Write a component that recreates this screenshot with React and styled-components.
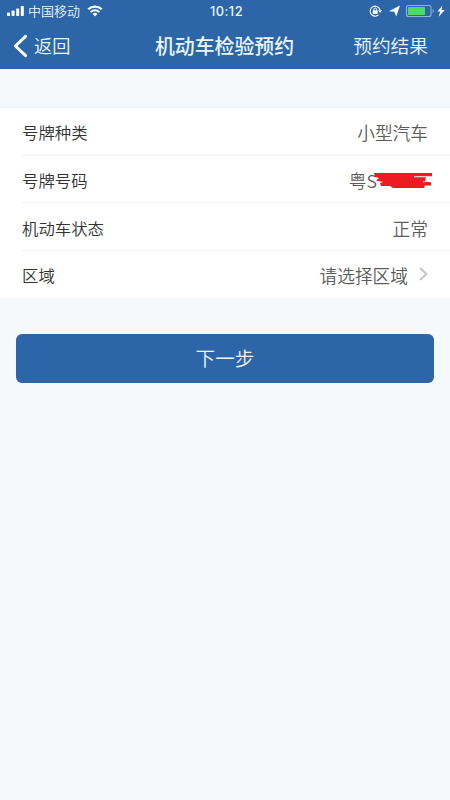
import React from "react";
import styled, { createGlobalStyle } from "styled-components";

const GlobalStyle = createGlobalStyle`
  body {
    margin: 0;
    background: #f5f9fb;
    font-family: "Noto Sans CJK SC", sans-serif;
    font-weight: 350;
  }
`;

const Page = styled.div`
  min-height: 800px;
  width: 450px;
  background: #f5f9fb;
`;

const Header = styled.header`
  height: 69px;
  box-sizing: border-box;
  border-bottom: 1px solid #2560a4;
  background: #2c66a8;
  color: #ebf5fd;
`;

const StatusBar = styled.div`
  display: grid;
  grid-template-columns: 1fr auto 1fr;
  align-items: center;
  height: 23px;
  padding: 0 4px 0 7px;
`;

const StatusGroup = styled.div`
  display: flex;
  align-items: center;
  justify-content: ${props => (props.$end ? "flex-end" : "flex-start")};
`;

const Carrier = styled.span`
  margin: -1px 7px 0 4px;
  font-size: 13px;
  line-height: 22px;
`;

const Clock = styled.span`
  font-family: Inter, sans-serif;
  font-size: 12.8px;
  font-weight: 500;
  letter-spacing: 0.5px;
`;

const NavBar = styled.div`
  display: grid;
  grid-template-columns: 1fr auto 1fr;
  align-items: center;
  height: 46px;
  padding: 0 22px 0 13px;
`;

const BackLink = styled.a`
  display: flex;
  align-items: center;
  gap: 6px;
  font-size: 18.2px;
  line-height: 44px;
`;

const BackText = styled.span`
  padding-bottom: 2px;
`;

const Title = styled.h1`
  margin: 0 0 0 8px;
  font-size: 19.9px;
  font-weight: 500;
  line-height: 46px;
`;

const ResultLink = styled.a`
  justify-self: end;
  padding-bottom: 2px;
  font-size: 18.7px;
  line-height: 44px;
`;

const Form = styled.div`
  margin-top: 38px;
  padding-left: 22px;
  border-top: 1px solid #f0f2f3;
  background: #fff;
`;

const Row = styled.div`
  display: flex;
  align-items: center;
  justify-content: space-between;
  height: ${props => (props.$last ? "47px" : "47.7px")};
  box-sizing: border-box;
  padding: 2px 22px 0 0;
  border-bottom: 1px solid ${props => (props.$last ? "#fff" : "#f3f3f3")};
`;

const Label = styled.span`
  font-size: 16.4px;
  color: #333;
`;

const Value = styled.span`
  display: flex;
  align-items: center;
  font-size: 17.7px;
  color: #5c5c5c;
`;

const Plate = styled(Value)`
  margin-right: -4px;
`;

const NextButton = styled.button`
  display: block;
  width: 418px;
  height: 49px;
  margin: 36px 16px 0;
  padding: 0 0 2px;
  border: 0;
  border-radius: 6px;
  background: #2c66a8;
  color: #ebf5fd;
  font-family: inherit;
  font-size: 19.6px;
  font-weight: inherit;
`;

const Signal = () => (
  <svg width="17" height="11" viewBox="0 0 17 11" fill="#fff">
    <rect x="0" y="6.5" width="3" height="3.5" rx="0.7" />
    <rect x="4.6" y="4.5" width="3" height="5.5" rx="0.7" />
    <rect x="9.2" y="2.5" width="3" height="7.5" rx="0.7" />
    <rect x="13.8" y="0" width="3" height="10" rx="0.7" />
  </svg>
);

const WifiSvg = styled.svg`
  margin-top: -2px;
`;

const Wifi = () => (
  <WifiSvg width="16" height="12" viewBox="0 0 16 12" fill="none" stroke="#fff">
    <path d="M1.2 4.3a9.8 9.8 0 0 1 13.6 0" strokeWidth="2.2" />
    <path d="M3.7 7.1a6.2 6.2 0 0 1 8.6 0" strokeWidth="2" />
    <path d="M5.7 8.9a3.4 3.4 0 0 1 4.6 0L8 11.4z" fill="#fff" stroke="none" />
  </WifiSvg>
);

const StatusSvg = styled.svg`
  margin-top: -2px;
`;

const StatusIcons = () => (
  <StatusSvg width="77" height="14" viewBox="0 0 77 14" fill="none">
    {/* rotation lock */}
    <path
      d="M9.5 10.9A5 5 0 1 1 11 6"
      stroke="#fff"
      strokeWidth="1.1"
    />
    <path d="M9 6.2h4l-2 2.7z" fill="#fff" />
    <rect x="3.8" y="6.3" width="4.8" height="3.7" rx="0.4" fill="#fff" />
    <path d="M4.8 6.5V5.4a1.4 1.4 0 0 1 2.8 0v1.1" stroke="#fff" />
    {/* location */}
    <path d="M31 1.5L27.2 12.4l-1.8-4.6-5.6-.6z" fill="#fff" />
    {/* battery */}
    <rect
      x="37.5"
      y="1.5"
      width="24.5"
      height="11"
      rx="2"
      stroke="#92b5d1"
      strokeWidth="1.1"
    />
    <rect x="39" y="3" width="17" height="8" rx="0.7" fill="#4cda64" />
    <path d="M63.7 5v4q1.2-.7 1.2-2t-1.2-2z" fill="#92b5d1" />
    <path d="M73.3 1.5l-4.8 6h2.7l-1.5 5.3 6-6.8h-3.2z" fill="#fff" />
  </StatusSvg>
);

const BackIcon = () => (
  <svg width="15" height="24" viewBox="0 0 15 24" fill="none">
    <path
      d="M12.6 2.3L2.4 12l10.2 9.7"
      stroke="#fff"
      strokeWidth="3"
      strokeLinecap="round"
      strokeLinejoin="round"
    />
  </svg>
);

const ArrowSvg = styled.svg`
  margin: -3px 0 0 11px;
`;

const Arrow = () => (
  <ArrowSvg width="9" height="14" viewBox="0 0 9 14" fill="none">
    <path d="M1 1l6.5 6L1 13" stroke="#c2c2c2" strokeWidth="1.8" />
  </ArrowSvg>
);

const ScribbleSvg = styled.svg`
  margin-left: -3px;
`;

const Scribble = () => (
  <ScribbleSvg width="58" height="18" viewBox="0 0 58 18">
    <path
      d="M0 2H58V5.3H40V6.3H52L51.5 10.8L57 11.2V14.5H50.5V17H19L16 15H7L6 12L9 11L2 9.5L5 7L1 6Z"
      fill="#ed1c24"
    />
    <path
      d="M49 10.8h2.5V7.5"
      stroke="#f8dcdc"
      strokeWidth="0.8"
      fill="none"
    />
  </ScribbleSvg>
);

const App = () => {
  return (
    <Page>
      <GlobalStyle />
      <Header>
        <StatusBar>
          <StatusGroup>
            <Signal />
            <Carrier>中国移动</Carrier>
            <Wifi />
          </StatusGroup>
          <Clock>10:12</Clock>
          <StatusGroup $end>
            <StatusIcons />
          </StatusGroup>
        </StatusBar>
        <NavBar>
          <BackLink>
            <BackIcon />
            <BackText>返回</BackText>
          </BackLink>
          <Title>机动车检验预约</Title>
          <ResultLink>预约结果</ResultLink>
        </NavBar>
      </Header>
      <Form>
        <Row>
          <Label>号牌种类</Label>
          <Value>小型汽车</Value>
        </Row>
        <Row>
          <Label>号牌号码</Label>
          <Plate>
            粤S
            <Scribble />
          </Plate>
        </Row>
        <Row>
          <Label>机动车状态</Label>
          <Value>正常</Value>
        </Row>
        <Row $last>
          <Label>区域</Label>
          <Value>
            请选择区域
            <Arrow />
          </Value>
        </Row>
      </Form>
      <NextButton>下一步</NextButton>
    </Page>
  );
};

export default App;
